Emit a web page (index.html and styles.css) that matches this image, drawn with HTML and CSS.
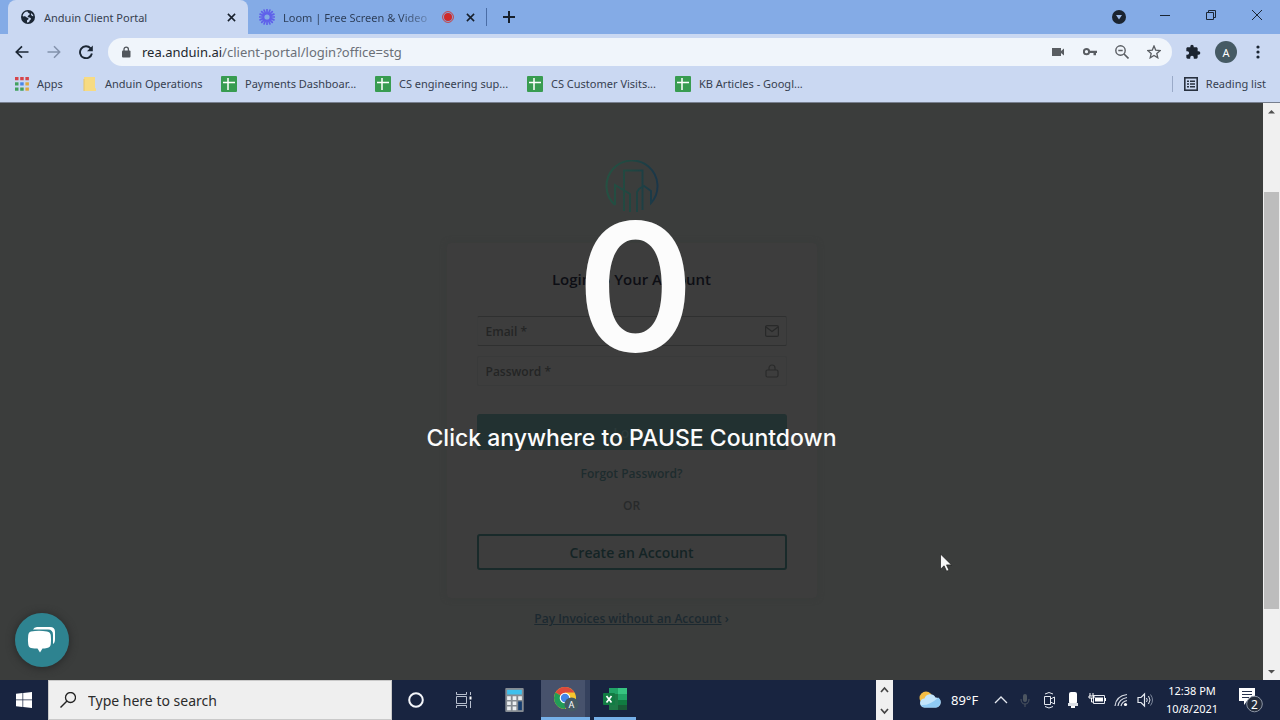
FILE: index.html
```html
<!DOCTYPE html>
<html lang="en">
<head>
<meta charset="utf-8">
<title>Anduin Client Portal</title>
<link rel="stylesheet" href="styles.css">
</head>
<body>
<svg class="defs" aria-hidden="true">
  <symbol id="sheet" viewBox="0 0 16 16"><rect width="16" height="16" rx="1" fill="#389c51"/><path d="M2 6.500h12M7 2v12" stroke="#fff" stroke-width="1.500"/></symbol>
  <symbol id="cross" viewBox="0 0 10 10"><path d="M1 1l8 8M9 1l-8 8" stroke="currentColor" stroke-width="1.700"/></symbol>
</svg>

<header class="browser">
  <div class="tabstrip">
    <div class="tab tab-active">
      <svg class="ic14" viewBox="0 0 14 14"><circle cx="7" cy="7" r="7" fill="#1b2634"/><path d="M6.500 1.500C4 1.500 2 3.500 1.600 6c1.400.9 2.800 0 3.600 1 .6.900 2.300.3 2.300 1.700S6 9.500 6 10.500v2c1.500.2 2.700-.5 2.400-1.700.9-.6 1.500-1.200 1.600-2.300-1-1.500-3-.6-3.400-2C7 5.200 9 5 8.900 3.800c-.5-.7-2-.4-2.400-2.300zM10 3.200c-.3 1.800.6 2.800 2.400 3-.2-1.300-1.100-2.400-2.400-3z" fill="#cbd9f3"/></svg>
      <span class="tab-title">Anduin Client Portal</span>
      <button class="plain" aria-label="Close tab"><svg class="ic9"><use href="#cross"/></svg></button>
    </div>
    <div class="tab tab-second">
      <svg class="ic16" viewBox="-8 -8 16 16"><g stroke="#5f60ea" stroke-width="1.700" stroke-linecap="round"><path d="M0-7.500v15M-7.500 0h15M-5.300-5.300l10.600 10.600M5.300-5.300L-5.300 5.300M-2.900-6.900l5.800 13.800M2.900-6.900l-5.800 13.800M-6.900-2.900l13.800 5.800M-6.900 2.900l13.800-5.800"/></g><circle r="2.600" fill="#84abe6"/></svg>
      <span class="tab-title tab-fade">Loom | Free Screen &amp; Video</span>
      <svg class="ic12" viewBox="0 0 12 12"><circle cx="6" cy="6" r="5.400" fill="none" stroke="#c8403f"/><circle cx="6" cy="6" r="4" fill="#cf2929"/></svg>
      <button class="plain" aria-label="Close tab"><svg class="ic9"><use href="#cross"/></svg></button>
    </div>
    <button class="plain newtab" aria-label="New tab"><svg class="ic12" viewBox="0 0 12 12"><path d="M6 0v12M0 6h12" stroke="#17202c" stroke-width="2"/></svg></button>
    <div class="window-controls">
      <button class="plain" aria-label="Search tabs"><svg class="ic14 low" viewBox="0 0 14 14"><circle cx="7" cy="7" r="7" fill="#1b2430"/><path d="M4 5h6L7 9.500z" fill="#9dbbe9"/></svg></button>
      <button class="plain" aria-label="Minimize"><svg class="ic12" viewBox="0 0 12 12"><path d="M1 6.500h10" stroke="#1b2634"/></svg></button>
      <button class="plain" aria-label="Restore"><svg class="ic12" viewBox="0 0 12 12"><path d="M1.500 3.500h7v7h-7zM3.500 3V1.500h7v7H9" fill="none" stroke="#1b2634"/></svg></button>
      <button class="plain" aria-label="Close"><svg class="ic12" viewBox="0 0 12 12"><path d="M1 1l10 10M11 1L1 11" stroke="#1b2634"/></svg></button>
    </div>
  </div>

  <div class="toolbar">
    <button class="plain nav" aria-label="Back"><svg class="ic14" viewBox="0 0 14 14"><path d="M13.500 7H1.500M7 1.300L1.300 7 7 12.700" fill="none" stroke="#1b2634" stroke-width="1.700"/></svg></button>
    <button class="plain nav" aria-label="Forward"><svg class="ic14" viewBox="0 0 14 14"><path d="M.5 7h12M7 1.300L12.700 7 7 12.700" fill="none" stroke="#8392ac" stroke-width="1.500"/></svg></button>
    <button class="plain nav" aria-label="Reload"><svg class="ic14" viewBox="0 0 14 14"><path d="M11.600 3.300A6 6 0 1 0 12.900 8.500" fill="none" stroke="#1b2634" stroke-width="1.900"/><path d="M13.800.5v5.800H8z" fill="#1b2634"/></svg></button>
    <div class="omnibox">
      <svg class="lock" viewBox="0 0 10 12"><rect x="1" y="4.500" width="8.500" height="7" rx="1" fill="#51565c"/><path d="M3 5V3.300a2.200 2.200 0 0 1 4.400 0V5" fill="none" stroke="#51565c" stroke-width="1.300"/></svg>
      <span class="url"><b>rea.anduin.ai</b>/client-portal/login?office=stg</span>
      <button class="plain" aria-label="Camera"><svg class="ic14" viewBox="0 0 14 14"><path d="M1 3h9v3l3-2.500v7L10 8v3H1z" fill="#595d62"/></svg></button>
      <button class="plain" aria-label="Passwords"><svg class="ic14" viewBox="0 0 14 14"><circle cx="3.500" cy="6.700" r="2.600" fill="none" stroke="#595d62" stroke-width="2"/><path d="M6 5.700h8v2.200h-1v2.300h-2.500V7.900H6z" fill="#595d62"/></svg></button>
      <button class="plain" aria-label="Zoom"><svg class="ic14" viewBox="0 0 14 14"><circle cx="5.500" cy="5.500" r="4.700" fill="none" stroke="#595d62" stroke-width="1.400"/><path d="M3.300 5.500h4.400M9 9l4.500 4.500" stroke="#595d62" stroke-width="1.600"/></svg></button>
      <button class="plain" aria-label="Bookmark"><svg class="ic14" viewBox="0 0 14 14"><path d="M7 1l1.700 4.100 4.500.4-3.400 2.900 1 4.400L7 10.500l-3.800 2.300 1-4.400L.8 5.500l4.500-.4z" fill="none" stroke="#595d62" stroke-width="1.300"/></svg></button>
    </div>
    <div class="toolbar-end">
      <button class="plain" aria-label="Extensions"><svg class="ic16" viewBox="0 0 24 24"><path d="M20.500 11H19V7c0-1.100-.9-2-2-2h-4V3.500a2.500 2.500 0 0 0-5 0V5H4c-1.100 0-2 .9-2 2v3.800h1.500a2.700 2.700 0 0 1 0 5.400H2V20c0 1.100.9 2 2 2h3.800v-1.500a2.700 2.700 0 0 1 5.400 0V22H17c1.100 0 2-.9 2-2v-4h1.500a2.500 2.500 0 0 0 0-5z" fill="#1b2430"/></svg></button>
      <button class="plain avatar" aria-label="Profile">A</button>
      <button class="plain" aria-label="Menu"><svg class="ic14" viewBox="0 0 14 14"><g fill="#1b2634"><circle cx="7" cy="2" r="1.600"/><circle cx="7" cy="7" r="1.600"/><circle cx="7" cy="12" r="1.600"/></g></svg></button>
    </div>
  </div>

  <nav class="bookmarks" aria-label="Bookmarks">
    <a href="#" class="bm-apps"><svg class="ic14" viewBox="0 0 14 14"><path d="M0 0h3.500v3.200H0zM5.200 0h3.500v3.200H5.200zM10.400 0h3.500v3.200h-3.500z" fill="#d6444a"/><path d="M0 5.300h3.500v3.200H0z" fill="#43a15f"/><path d="M5.200 5.300h3.500v3.200H5.200z" fill="#4a86e8"/><path d="M10.400 5.300h3.500v3.200h-3.500z" fill="#e0a83e"/><path d="M0 10.500h3.500v3.200H0zM5.200 10.500h3.500v3.200H5.200z" fill="#43a15f"/><path d="M10.400 10.500h3.500v3.200h-3.500z" fill="#e0a83e"/></svg>Apps</a>
    <a href="#" class="bm-ops"><svg class="ic14" viewBox="0 0 14 14"><path d="M1 0h11v11l1 .5V14H1z" fill="#f7db83"/><path d="M1 2v12" stroke="#e7c568"/></svg>Anduin Operations</a>
    <a href="#" class="bm-pay"><svg class="ic16"><use href="#sheet"/></svg>Payments Dashboar...</a>
    <a href="#" class="bm-eng"><svg class="ic16"><use href="#sheet"/></svg>CS engineering sup...</a>
    <a href="#" class="bm-vis"><svg class="ic16"><use href="#sheet"/></svg>CS Customer Visits...</a>
    <a href="#" class="bm-kb"><svg class="ic16"><use href="#sheet"/></svg>KB Articles - Googl...</a>
    <a href="#" class="bm-read"><svg class="ic14" viewBox="0 0 14 14"><rect x=".8" y=".8" width="12.400" height="12.400" fill="none" stroke="#28313f" stroke-width="1.600"/><path d="M3 4.200h2M6 4.200h5M3 7h2M6 7h5M3 9.800h2M6 9.800h5" stroke="#28313f" stroke-width="1.500"/></svg>Reading list</a>
  </nav>
</header>

<div class="viewport">
  <main class="page">
    <svg class="logo" viewBox="0 0 54 54" role="img" aria-label="Anduin">
      <defs><linearGradient id="lg" gradientUnits="userSpaceOnUse" x1="0" x2="54" y1="0" y2="0"><stop offset="0" stop-color="#255142"/><stop offset=".5" stop-color="#204641"/><stop offset="1" stop-color="#1a3549"/></linearGradient></defs>
      <g fill="none" stroke="url(#lg)" stroke-width="2"><path d="M10 45A25.500 25.500 0 1 1 46 43V31l-7-5-5 3-2 3v20"/><path d="M10 45V25l15 9v18M19 51V10.500h18.500V50"/></g>
    </svg>
    <form class="card">
      <h1>Login to Your Account</h1>
      <label class="field field-line"><input type="email" placeholder="Email *" aria-label="Email"><svg class="ic14" viewBox="0 0 14 14"><rect x=".6" y="1.600" width="12.800" height="10.800" rx="1.500" fill="none" stroke="#282929" stroke-width="1.200"/><path d="M1 3l6 4.500L13 3" fill="none" stroke="#282929" stroke-width="1.200"/></svg></label>
      <label class="field"><input type="password" placeholder="Password *" aria-label="Password"><svg class="ic14" viewBox="0 0 14 14"><rect x="1" y="6" width="12" height="7" rx="1.500" fill="none" stroke="#2a2b2b" stroke-width="1.200"/><path d="M4 6V4a3 3 0 0 1 6 0v2" fill="none" stroke="#2a2b2b" stroke-width="1.200"/></svg></label>
      <button type="button" class="login">Login</button>
      <a href="#" class="forgot">Forgot Password?</a>
      <span class="or">OR</span>
      <button type="button" class="create">Create an Account</button>
    </form>
    <p class="pay"><a href="#">Pay Invoices without an Account</a> ›</p>

    <div class="overlay">
      <div class="count">0</div>
      <div class="hint">Click anywhere to PAUSE Countdown</div>
    </div>
    <button class="plain chat" aria-label="Open chat"><svg viewBox="0 0 54 54"><circle cx="27" cy="27" r="27" fill="#2e8390"/><path d="M18 16.500q1-2.500 4-2.500h13q5 0 5 5v7q0 4-2 5v-9q0-5.500-5-5.500z" fill="#fff"/><path d="M16 18.500Q24 17 32 18.500q3.500.5 3.800 4Q36.300 27 35.800 31q-.3 3.500-3.800 4-2.500.5-4.500.6L25 39.500l-2.500-3.900q-3 0-6.500-.6-2.500-.5-2.800-4-.5-4.500 0-8.500.3-3.500 2.800-4z" fill="#fff"/></svg></button>
    <svg class="cursor" viewBox="0 0 12 19"><path d="M.5 1v15.200l3.600-3.400 2.500 5.400 2.400-1-2.500-5.300h5z" fill="#f7f7f7" stroke="#1c1c1c" stroke-width=".7"/></svg>
  </main>
  <div class="scrollbar" aria-hidden="true">
    <svg viewBox="0 0 17 17"><path d="M5 10.500h7L8.500 7z" fill="#505050"/></svg>
    <div class="track"><div class="thumb"></div></div>
    <svg viewBox="0 0 17 17"><path d="M5 7h7l-3.500 3.500z" fill="#505050"/></svg>
  </div>
</div>

<footer class="taskbar">
  <button class="plain start" aria-label="Start"><svg class="ic16" viewBox="0 0 16 16"><path d="M0 1.800L6.500 1v6.600H0zM7.200.9L16 0v7.600H7.200zM0 8.300h6.500v6.600L0 14.200zM7.200 8.300H16V16l-8.800-.9z" fill="#fff"/></svg></button>
  <label class="search"><svg class="ic16" viewBox="0 0 16 16"><circle cx="10.500" cy="5.500" r="5" fill="none" stroke="#222" stroke-width="1.300"/><path d="M7 9L.5 15.500" stroke="#222" stroke-width="1.400"/></svg><input type="text" placeholder="Type here to search" aria-label="Search"></label>
  <div class="apps">
    <button class="plain app" aria-label="Cortana"><svg class="ic16" viewBox="0 0 16 16"><circle cx="8" cy="8" r="6.800" fill="none" stroke="#f4f6fa" stroke-width="2"/></svg></button>
    <button class="plain app" aria-label="Task view"><svg class="ic16" viewBox="0 0 16 16"><path d="M.5 0v2.500h10V0M.5 16v-2.500h10V16M.5 4.500h10v7H.5zM14.500 0v3M14.500 9v7" fill="none" stroke="#b7bfce"/><path d="M13.500 4.500h2v3h-2z" fill="#fff"/></svg></button>
    <button class="plain app app-calc" aria-label="Calculator"><svg viewBox="0 0 20 26"><rect width="20" height="26" rx="1" fill="#858b92"/><path d="M2 2h16v5H2z" fill="#3fc0ec"/><path d="M2 9h4v4H2zM8 9h4v4H8zM14 9h4v4h-4zM2 14.500h4v4H2zM8 14.500h4v4H8zM2 20h4v4H2zM8 20h4v4H8z" fill="#eceff1"/><path d="M14 14.500h4V24h-4z" fill="#143d70"/></svg></button>
    <button class="plain app app-chrome" aria-label="Chrome"><svg viewBox="0 0 26 26"><circle cx="12" cy="12" r="11" fill="#f7c52d"/><path d="M12 12L2.500 6.500A11 11 0 0 1 21.500 6.500H12z" fill="#dc493c"/><path d="M2.500 6.500A11 11 0 0 0 12 23l4.500-8.500L12 12z" fill="#229c58"/><circle cx="12" cy="12" r="5.300" fill="#fff"/><circle cx="12" cy="12" r="4.200" fill="#4285e8"/><circle cx="18.500" cy="18.500" r="7" fill="#455a64"/><text x="18.500" y="22" class="badge-a">A</text></svg></button>
    <button class="plain app app-excel" aria-label="Excel"><svg viewBox="0 0 24 22"><path d="M6 0h18v22H6z" fill="#1d7a47"/><path d="M6 0h9v6H6z" fill="#21a366"/><path d="M15 0h9v6h-9z" fill="#37c481"/><path d="M15 6h9v6h-9z" fill="#21a366"/><path d="M15 12h9v10h-9z" fill="#185c37"/><path d="M15 12h9v5h-9z" fill="#107c41"/><rect y="5" width="12" height="12" rx="1" fill="#117c43"/><path d="M3.500 8l5 6.500M8.500 8l-5 6.500" stroke="#fff" stroke-width="1.700"/></svg></button>
  </div>
  <div class="tray">
    <div class="stepper"><svg viewBox="0 0 17 40"><path d="M5 12l3.500-4 3.500 4M5 29l3.500 4 3.500-4" fill="none" stroke="#444" stroke-width="1.700"/></svg></div>
    <div class="weather"><svg viewBox="0 0 22 18"><circle cx="7" cy="7" r="6.500" fill="#f4bd45"/><path d="M5.500 16.500a4.500 4.500 0 0 1 0-9 6 6 0 0 1 11-1 5 5 0 0 1 .5 10z" fill="#c3e5fb"/><path d="M5.500 16.500Q3 16 2 14q8 1 17.500-7.500Q23 10 20.500 14q-1 2.500-3.500 2.500z" fill="#8fcbf5"/></svg>89°F</div>
    <div class="icons">
      <svg viewBox="0 0 24 24"><path d="M6 15l6-6 6 6" fill="none" stroke="#e4e8ef" stroke-width="1.300"/></svg>
      <svg viewBox="0 0 24 24"><rect x="10" y="6" width="4" height="8" rx="2" fill="#4c5560"/><path d="M8 11q0 5 4 5t4-5M12 16v3" fill="none" stroke="#4c5560"/></svg>
      <svg viewBox="0 0 24 24"><path d="M7.500 8.500h6v8h-6zM13.500 11l4-2v7l-4-2M8 6q4-3 8 0M8 18.500q4 3 8 0" fill="none" stroke="#e4e8ef"/></svg>
      <svg viewBox="0 0 24 24"><rect x="8" y="4" width="8" height="12" rx="2" fill="#fff"/><path d="M7 15h10v3H7z" fill="#dce0e6"/><path d="M10 18h4v2h-4z" fill="#fff"/></svg>
      <svg viewBox="0 0 24 24"><path d="M8.500 7.500h11v8h-11z" fill="none" stroke="#e4e8ef"/><path d="M10 9.500h8v4h-8z" fill="#fff"/><path d="M20.500 10v3M5 5v3M8 5v3M4 8h5v2H4zM6.500 10v4h2" fill="none" stroke="#fff"/></svg>
      <svg viewBox="0 0 24 24"><path d="M6 18Q7 8 18 6.500M9 18Q10 11 18 9.500M12 18q1-4.500 6-5.500" fill="none" stroke="#d5dae3" stroke-width="1.200"/><circle cx="16.500" cy="16.500" r="1.600" fill="#fff"/></svg>
      <svg viewBox="0 0 24 24"><path d="M5 9.500h3L11.500 6v12L8 14.500H5z" fill="none" stroke="#e4e8ef" stroke-width="1.200"/><path d="M13.500 10q1.500 2 0 4M15.500 8q3 4 0 8" fill="none" stroke="#e4e8ef"/><path d="M17.500 6.500q4 5.500 0 11" fill="none" stroke="#7e899d"/></svg>
    </div>
    <div class="clock"><span>12:38 PM</span><span>10/8/2021</span></div>
    <button class="plain notify" aria-label="2 notifications"><svg viewBox="0 0 26 26"><path d="M1 1h16v13H9l-3 4v-4H1z" fill="#fff"/><path d="M4 4.500h10M4 7.500h10M4 10.500h7" stroke="#26324d"/><circle cx="16.500" cy="17" r="7.800" fill="#242c3b" stroke="#8c95a4"/><text x="16.500" y="21.500" class="badge-n">2</text></svg></button>
  </div>
</footer>
</body>
</html>
```

FILE: styles.css
```css
* { box-sizing: border-box; }
body {
  margin: 0;
  height: 100vh;
  display: flex;
  flex-direction: column;
  overflow: hidden;
  font-family: "Noto Sans", "Open Sans", sans-serif;
  font-size: 11px;
  color: #364050;
}
.defs { position: absolute; width: 0; height: 0; }
svg { display: block; flex: none; }
a { color: inherit; text-decoration: none; }
.plain {
  border: 0;
  padding: 0;
  background: none;
  color: #17202c;
  font: inherit;
  display: flex;
  align-items: center;
  justify-content: center;
}
.ic9 { width: 9px; height: 9px; }
.ic12 { width: 12px; height: 12px; }
.ic14 { width: 14px; height: 14px; }
.ic16 { width: 16px; height: 16px; }

/* Browser frame */
.browser { flex: none; background: #cad8f2; border-bottom: 1px solid #777f8e; }
.tabstrip { display: flex; height: 34px; background: #84abe6; padding-left: 8px; }
.tab { display: flex; align-items: center; gap: 9px; }
.tab-active { width: 240px; padding: 0 12px 0 13px; background: #cad8f2; border-radius: 8px 8px 0 0; }
.tab-title { flex: 1; white-space: nowrap; overflow: hidden; }
.tab-second { width: 239px; margin: 8px 0; padding: 0 11px 0 11px; gap: 8px; border-right: 1px solid #4a6da6; }
.tab-second .ic12 { margin: 0 4px; }
.tab-fade {
  background: linear-gradient(90deg, #2b3c56 80%, #6f8fc0);
  background-clip: text;
  color: transparent;
}
.newtab { width: 44px; }
.window-controls { margin-left: auto; display: flex; padding-bottom: 4px; }
.window-controls button { width: 46px; }
.low { margin-top: 4px; }

.toolbar { display: flex; align-items: center; height: 36px; padding-left: 6px; }
.nav { width: 32px; height: 28px; }
.omnibox {
  flex: 1;
  display: flex;
  align-items: center;
  height: 28px;
  margin-left: 6px;
  padding: 0 11px 0 13px;
  gap: 18px;
  border-radius: 14px;
  background: #f0f5fb;
}
.lock { width: 10px; height: 12px; margin-right: -7px; }
.url { flex: 1; font-size: 13px; color: #6b7078; }
.url b { font-weight: 400; color: #22272e; }
.toolbar-end { display: flex; align-items: center; gap: 14px; padding: 0 15px 0 13px; }
.avatar { width: 22px; height: 22px; border-radius: 50%; background: #455a64; color: #fff; }

.bookmarks { display: flex; align-items: center; height: 32px; padding: 0 14px 5px 15px; white-space: nowrap; }
.bookmarks a { display: flex; align-items: center; gap: 8px; }
.bm-apps { width: 68px; }
.bm-ops { width: 138px; }
.bm-pay { width: 154px; }
.bm-eng { width: 152px; }
.bm-vis { width: 148px; }
.bookmarks .bm-read { margin-left: auto; padding-left: 11px; line-height: 16px; border-left: 1px solid #9aaac8; }

/* Web page */
.viewport { flex: 1; min-height: 0; display: flex; }
.page {
  position: relative;
  flex: 1;
  display: flex;
  flex-direction: column;
  align-items: center;
  padding-top: 57px;
  overflow: hidden;
  background: #3b3d3c;
  font-family: "Open Sans", "Noto Sans", sans-serif;
  font-size: 12px;
  font-weight: 600;
}
.logo { width: 54px; height: 54px; }
.card {
  display: flex;
  flex-direction: column;
  width: 370px;
  margin-top: 29px;
  padding: 24px 30px 28px;
  border-radius: 4px;
  background: #3d3d3d;
  box-shadow: 0 0 6px #393b3a;
}
.card h1 { margin: 0; font-size: 15px; line-height: 24px; font-weight: 600; text-align: center; color: #0d0e14; }
.field {
  display: flex;
  align-items: center;
  height: 30px;
  margin-top: 10px;
  padding: 0 7px 0 8px;
  border: 1px solid #393a3a;
  border-radius: 2px;
}
.card h1 + .field { margin-top: 25px; }
.field-line { border-color: #2f3030 #363737 #2f3030 #3b3c3c; }
.field input { flex: 1; min-width: 0; padding: 0; border: 0; outline: 0; background: none; font: inherit; }
.field input::placeholder { color: #242525; opacity: 1; }
.login, .create { height: 36px; border-radius: 3px; font: inherit; font-size: 14px; }
.login { margin-top: 28px; border: 0; background: #223131; color: #2c3a3a; }
.forgot { margin-top: 14px; line-height: 20px; text-align: center; color: #1d2c2e; }
.or { margin: 12px 0 18px; line-height: 20px; text-align: center; color: #282a2b; }
.create { border: 2px solid #192a2a; background: none; color: #142425; }
.pay { margin: 11px 0 0; line-height: 20px; color: #1c2930; }
.pay a { text-decoration: underline; }

.overlay {
  position: absolute;
  inset: 0;
  display: flex;
  flex-direction: column;
  align-items: center;
  gap: 55px;
  padding-top: 104px;
  font-family: Inter, sans-serif;
  color: #fcfcfc;
}
.count { padding-left: 8px; font-size: 178px; line-height: 160px; font-weight: 600; }
.hint { font-size: 23px; line-height: 32px; font-weight: 500; }
.chat { position: absolute; left: 15px; bottom: 13px; width: 54px; height: 54px; border-radius: 50%; box-shadow: 0 1px 8px #252727; }
.chat svg { width: 54px; height: 54px; }
.cursor { position: absolute; left: 940px; top: 450px; width: 12px; height: 19px; }

.scrollbar { flex: none; width: 17px; display: flex; flex-direction: column; background: #f0f0f0; }
.scrollbar svg { width: 17px; height: 17px; }
.track { flex: 1; display: flex; flex-direction: column; padding: 72px 1px 54px; }
.thumb { flex: 1; background: #bdbdbd; }

/* Taskbar */
.taskbar { flex: none; display: flex; height: 40px; background: #182440; color: #fff; }
.start { width: 48px; }
.search {
  display: flex;
  align-items: center;
  gap: 12px;
  width: 344px;
  padding-left: 11px;
  border: 1px solid #c9c9c9;
  background: #efefef;
}
.search input { flex: 1; min-width: 0; padding: 0; border: 0; outline: 0; background: none; font: inherit; font-size: 14px; }
.search input::placeholder { color: #2b2b2b; opacity: 1; }
.apps { display: flex; }
.app { width: 48px; }
.app-calc { width: 53px; }
.app-calc svg { width: 19px; height: 24px; }
.app-chrome { width: 49px; border-bottom: 3px solid #76b0e8; background: linear-gradient(90deg, #47526c 44px, #35415d 44px); }
.app-chrome svg { width: 26px; height: 26px; }
.app-excel { width: 42px; margin-left: 4px; border-bottom: 3px solid #76b0e8; }
.app-excel svg { width: 24px; height: 22px; }
.badge-a { font: 9px Roboto, sans-serif; fill: #fff; text-anchor: middle; }
.badge-n { font: 12px "Noto Sans", sans-serif; fill: #fff; text-anchor: middle; }
.tray { margin-left: auto; display: flex; align-items: center; }
.stepper { width: 17px; background: #f0f0f0; }
.stepper svg { width: 17px; height: 40px; }
.weather { display: flex; align-items: center; gap: 10px; width: 96px; padding-left: 26px; font-size: 13px; }
.weather svg { width: 22px; height: 18px; }
.icons { display: flex; }
.icons svg { width: 24px; height: 24px; }
.clock { display: flex; flex-direction: column; width: 70px; text-align: center; font-size: 11px; line-height: 18px; }
.notify { width: 53px; padding-left: 11px; justify-content: flex-start; }
.notify svg { width: 26px; height: 26px; }
```
